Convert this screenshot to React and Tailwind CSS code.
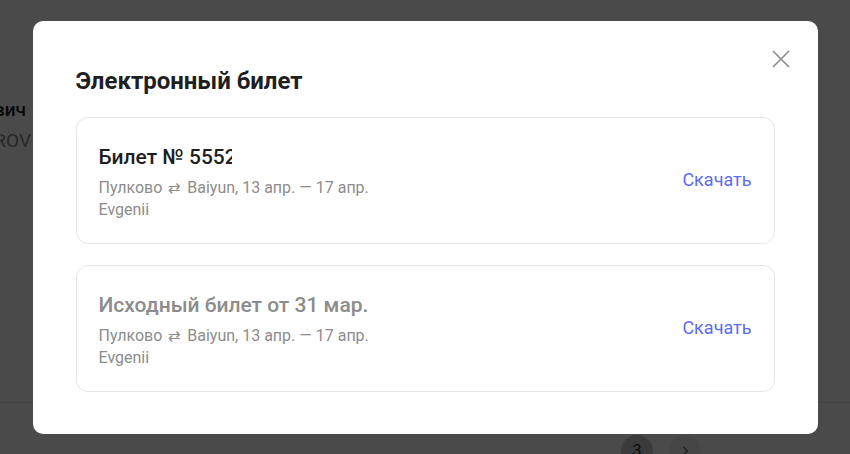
import React from "react";

function Card({ title, muted, clip }) {
  return (
    <div className="flex items-center justify-between rounded-[12px] border border-[#e6e6e6] bg-white pl-[22px] pr-[22px] pt-[25px] pb-[22px]">
      <div className="flex flex-col">
        <div
          className={
            "text-[21px] leading-[28px] font-medium whitespace-nowrap overflow-hidden " +
            (muted ? "text-[#8c8c8c]" : "text-[#1f1f1f]") +
            (clip ? " w-[133px]" : "")
          }
        >
          {title}
        </div>
        <div className="mt-[6px] text-[16px] leading-[22px] text-[#8c8c8c]">
          <div className="flex items-center">
            <span>Пулково</span>
            <span className="mx-[6px] text-[15px]">⇄</span>
            <span>Baiyun, 13 апр. — 17 апр.</span>
          </div>
          <div>Evgenii</div>
        </div>
      </div>
      <button className="mb-[3px] text-[18px] leading-[22px] text-[#5b6cf2]">Скачать</button>
    </div>
  );
}

export default function App() {
  return (
    <div
      className="relative h-[454px] w-[850px] overflow-hidden bg-white"
      style={{ fontFamily: "Roboto, 'Noto Sans', sans-serif" }}
    >
      {/* page behind */}
      <div className="flex h-full flex-col">
        <div className="mt-[98px] flex w-[26px] justify-end whitespace-nowrap text-[19px] leading-[24px] font-medium text-[#1a1a1a]">
          Иванович
        </div>
        <div className="mt-[7px] flex w-[31px] justify-end whitespace-nowrap text-[19px] leading-[24px] text-[#8a8a8a]">
          PETROV
        </div>
        <div className="mt-[249px] border-t border-[#e3e3e3]" />
        <div className="mt-[32px] flex items-center gap-[16px] pl-[621px]">
          <div className="flex h-[32px] w-[32px] shrink-0 items-center justify-center rounded-full bg-[#cbcbcb] text-[16px] text-[#222]">3</div>
          <div className="flex h-[32px] w-[32px] shrink-0 items-center justify-center rounded-full bg-[#f2f2f2]">
            <svg width="14" height="14" viewBox="0 0 24 24" fill="none" stroke="#555" strokeWidth="2">
              <path d="M9 5l7 7-7 7" />
            </svg>
          </div>
        </div>
      </div>

      {/* overlay */}
      <div className="absolute inset-0 flex items-center justify-center bg-black/[0.71]">
        <div className="relative w-[785px] rounded-[10px] bg-white px-[43px] pb-[42px] pt-[46px]">
          <button className="absolute right-[25px] top-[26px] flex h-[24px] w-[24px] items-center justify-center">
            <svg width="20" height="20" viewBox="0 0 20 20" fill="none" stroke="#8a8a8a" strokeWidth="1.6">
              <path d="M2 2l16 16M18 2L2 18" />
            </svg>
          </button>
          <div className="text-[24px] leading-[28px] font-bold text-[#1f1f1f]">Электронный билет</div>
          <div className="mt-[22px] flex flex-col gap-[21px]">
            <Card title="Билет № 55521234567" clip />
            <Card title="Исходный билет от 31 мар." muted />
          </div>
        </div>
      </div>
    </div>
  );
}
